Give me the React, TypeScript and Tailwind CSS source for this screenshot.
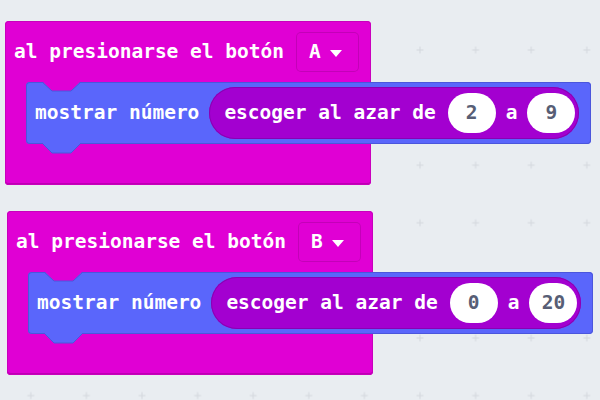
import React from "react";

interface HatBlockProps {
  button: string;
  from: string;
  to: string;
  className?: string;
}

const NumberSlot = ({ value }: { value: string }) => (
  <span className="flex h-[40px] w-[48px] items-center justify-center rounded-full bg-white text-[#575e75]">
    {value}
  </span>
);

const HatBlock = ({ button, from, to, className = "" }: HatBlockProps) => {
  return (
    <div
      className={`relative flex h-[164px] w-[366px] flex-col rounded-[4px] bg-[#e000d4] pl-[9px] pt-[11px] shadow-[inset_0_0_0_1px_#c900bd,inset_0_-2px_0_#bd00b2] ${className}`}
    >
      <div className="flex h-[40px] items-center gap-[12px]">
        <span>al presionarse el botón</span>
        <span className="flex h-[40px] w-[63px] items-center rounded-[5px] pl-[13px] shadow-[inset_0_0_0_1px_#c400b8]">
          {button}
          <svg width="12" height="7" viewBox="0 0 12 7" className="ml-[9px] mt-[2px]">
            <polygon points="0,0 12,0 6,7" fill="#ffffff" />
          </svg>
        </span>
      </div>

      <div className="relative ml-[12px] mt-[10px] flex h-[62px] w-[565px] shrink-0 items-center gap-[10px] rounded-[4px] bg-[#5a66fb] pl-[9px] shadow-[inset_0_0_0_1px_#4b56dc]">
        {/* notch on top */}
        <svg width="39" height="11" viewBox="0 0 39 11" className="absolute left-[16px] top-[-1px]">
          <polygon points="0,0 10,10 29,10 39,0" fill="#e000d4" />
          <polyline points="0,1 10,10 29,10 39,1" fill="none" stroke="#4b56dc" strokeWidth="1" />
        </svg>
        <span>mostrar número</span>
        <div className="flex h-[52px] items-center rounded-full bg-[#a300d0] pl-[15px] pr-[4px] shadow-[inset_0_0_0_1px_#8a00b3]">
          <span>escoger al azar de</span>
          <span className="ml-[12px]">
            <NumberSlot value={from} />
          </span>
          <span className="mx-[10px]">a</span>
          <NumberSlot value={to} />
        </div>
        {/* tab below */}
        <svg width="39" height="11" viewBox="0 0 39 11" className="absolute left-[16px] top-[61px]">
          <polygon points="0,0 10,10 29,10 39,0" fill="#5a66fb" />
          <polyline points="0,0 10,10 29,10 39,0" fill="none" stroke="#4b56dc" strokeWidth="1" />
        </svg>
      </div>
    </div>
  );
};

const App = () => {
  return (
    <main className="relative h-[400px] w-[600px] overflow-hidden bg-[#e9edf1] font-['DejaVu_Sans_Mono',monospace] text-[19.5px] font-bold text-white">
      <svg className="absolute inset-0" width="600" height="400">
        <defs>
          <pattern
            id="grid"
            patternUnits="userSpaceOnUse"
            x="392.2"
            y="21.2"
            width="55.6"
            height="57.6"
          >
            <path d="M24.3 28.8h7M27.8 25.3v7" stroke="#d3d8dd" strokeWidth="1" />
          </pattern>
        </defs>
        <rect width="600" height="400" fill="url(#grid)" />
      </svg>

      <section className="relative flex flex-col gap-[26px] pl-[5px] pt-[21px]">
        <HatBlock button="A" from="2" to="9" />
        <HatBlock button="B" from="0" to="20" className="ml-[2px]" />
      </section>
    </main>
  );
};

export default App;
